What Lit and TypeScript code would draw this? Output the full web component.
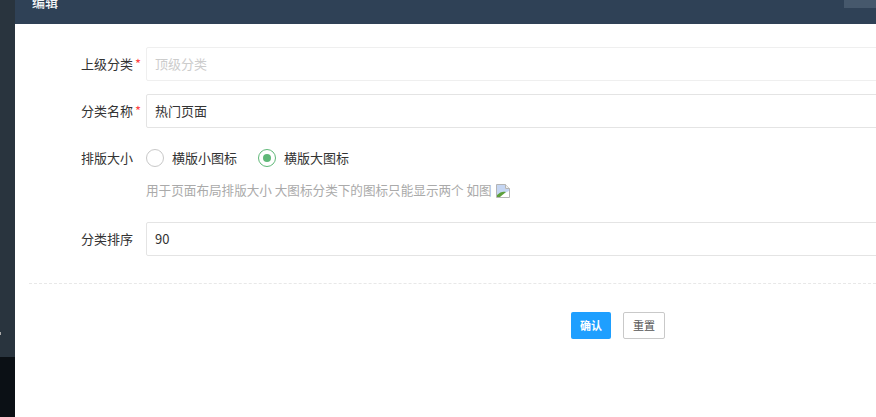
import { LitElement, html, css } from "lit";
import { customElement } from "lit/decorators.js";

@customElement("app-root")
export class AppRoot extends LitElement {
  static styles = css`
    :host {
      display: flex;
      width: 876px;
      height: 417px;
      overflow: hidden;
      background: #fff;
      font-family: "Noto Sans CJK SC", "Liberation Sans", sans-serif;
      font-size: 13px;
      color: #515a6e;
    }
    .side {
      width: 15px;
      flex: none;
      display: flex;
      flex-direction: column;
      background: #29343e;
      position: relative;
    }
    .side-top { height: 357px; flex: none; }
    .side-bottom { flex: 1; background: #0b1015; }
    .dot {
      position: absolute;
      left: 0;
      top: 332px;
      width: 1px;
      height: 3px;
      background: #a9a9a9;
    }
    .main { flex: 1; min-width: 0; display: flex; flex-direction: column; }
    .head {
      height: 24px;
      flex: none;
      background: #2f4156;
      position: relative;
      overflow: hidden;
      display: flex;
      align-items: flex-end;
      padding: 0 0 13px 17px;
      box-sizing: border-box;
    }
    .title { color: #f4f6f8; font-size: 13px; font-weight: 500; line-height: 18px; }
    .corner {
      position: absolute;
      right: 0;
      top: 0;
      width: 32px;
      height: 8px;
      background: #46586c;
    }
    .form { padding: 23px 0 0 0; display: flex; flex-direction: column; }
    .row { display: flex; align-items: center; height: 34px; margin-bottom: 13px; }
    .row.last { margin-bottom: 0; }
    .label {
      width: 131px;
      flex: none;
      box-sizing: border-box;
      padding: 0 0 2px 66px;
      display: flex;
      align-items: center;
      color: #333;
      font-size: 13px;
      white-space: nowrap;
    }
    .req { color: #f44; margin-left: 2px; font-size: 13px; line-height: 13px; }
    .input {
      width: 780px;
      height: 34px;
      flex: none;
      box-sizing: border-box;
      border: 1px solid #e4e4e4;
      border-radius: 2px;
      padding: 0 0 2px 8px;
      display: flex;
      align-items: center;
      color: #333;
      background: #fff;
    }
    .input.disabled { border-color: #efefef; color: #ccc; }
    .radios { display: flex; align-items: center; height: 34px; }
    .radio { display: flex; align-items: center; margin-right: 21px; color: #333; }
    .radio-text { position: relative; top: -1px; }
    .circle {
      width: 18px;
      height: 18px;
      box-sizing: border-box;
      border: 1.5px solid #c8c8c8;
      border-radius: 50%;
      margin-right: 8px;
      display: flex;
      align-items: center;
      justify-content: center;
    }
    .circle.on { border-color: #5fb878; }
    .circle.on::after {
      content: "";
      width: 8px;
      height: 8px;
      border-radius: 50%;
      background: #5fb878;
    }
    .radio-row { margin-bottom: 4px; margin-top: 0; }
    .help {
      margin-left: 131px;
      height: 20px;
      display: flex;
      align-items: center;
      color: #aaa;
      font-size: 12.6px;
      margin-bottom: 23px;
    }
    .broken { margin-left: 3px; margin-top: 4px; flex: none; }
    .divider { margin: 27px 0 0 14px; border-top: 1px dashed #e8e8e8; height: 0; }
    .actions { display: flex; align-items: flex-start; padding: 28px 0 0 556px; gap: 12px; }
    .btn {
      box-sizing: border-box;
      height: 27px;
      display: flex;
      align-items: center;
      justify-content: center;
      font-size: 11px;
      border-radius: 2px;
      padding-bottom: 1px;
    }
    .primary { width: 40px; background: #1e9fff; color: #fff; font-weight: 700; }
    .plain { width: 42px; background: #fff; color: #555; border: 1px solid #c9c9c9; }
  `;

  render() {
    return html`
      <div class="side">
        <div class="side-top"></div>
        <div class="side-bottom"></div>
        <div class="dot"></div>
      </div>
      <div class="main">
        <div class="head">
          <span class="title">编辑</span>
          <div class="corner"></div>
        </div>
        <div class="form">
          <div class="row">
            <div class="label">上级分类<span class="req">*</span></div>
            <div class="input disabled">顶级分类</div>
          </div>
          <div class="row">
            <div class="label">分类名称<span class="req">*</span></div>
            <div class="input">热门页面</div>
          </div>
          <div class="row radio-row">
            <div class="label">排版大小</div>
            <div class="radios">
              <div class="radio"><span class="circle"></span><span class="radio-text">横版小图标</span></div>
              <div class="radio"><span class="circle on"></span><span class="radio-text">横版大图标</span></div>
            </div>
          </div>
          <div class="help">
            用于页面布局排版大小 大图标分类下的图标只能显示两个 如图
            <svg class="broken" width="16" height="16" viewBox="0 0 16 16">
              <path d="M1.5 1.5H10.5L14.5 5.5V14.5H1.5Z" fill="#fff" stroke="#b5b5b5" />
              <path d="M10.5 1.5V5.5H14.5" fill="#eee" stroke="#b5b5b5" />
              <path d="M2 2H10V6H14V9L2 12Z" fill="#c5d6f3" />
              <path d="M2 14V12C5 9 8 8 11 9L5 14Z" fill="#5da03c" />
              <path d="M11 9.5L14 8V10L10 14H8Z" fill="#fff" />
            </svg>
          </div>
          <div class="row last">
            <div class="label">分类排序</div>
            <div class="input">90</div>
          </div>
          <div class="divider"></div>
          <div class="actions">
            <div class="btn primary">确认</div>
            <div class="btn plain">重置</div>
          </div>
        </div>
      </div>
    `;
  }
}
